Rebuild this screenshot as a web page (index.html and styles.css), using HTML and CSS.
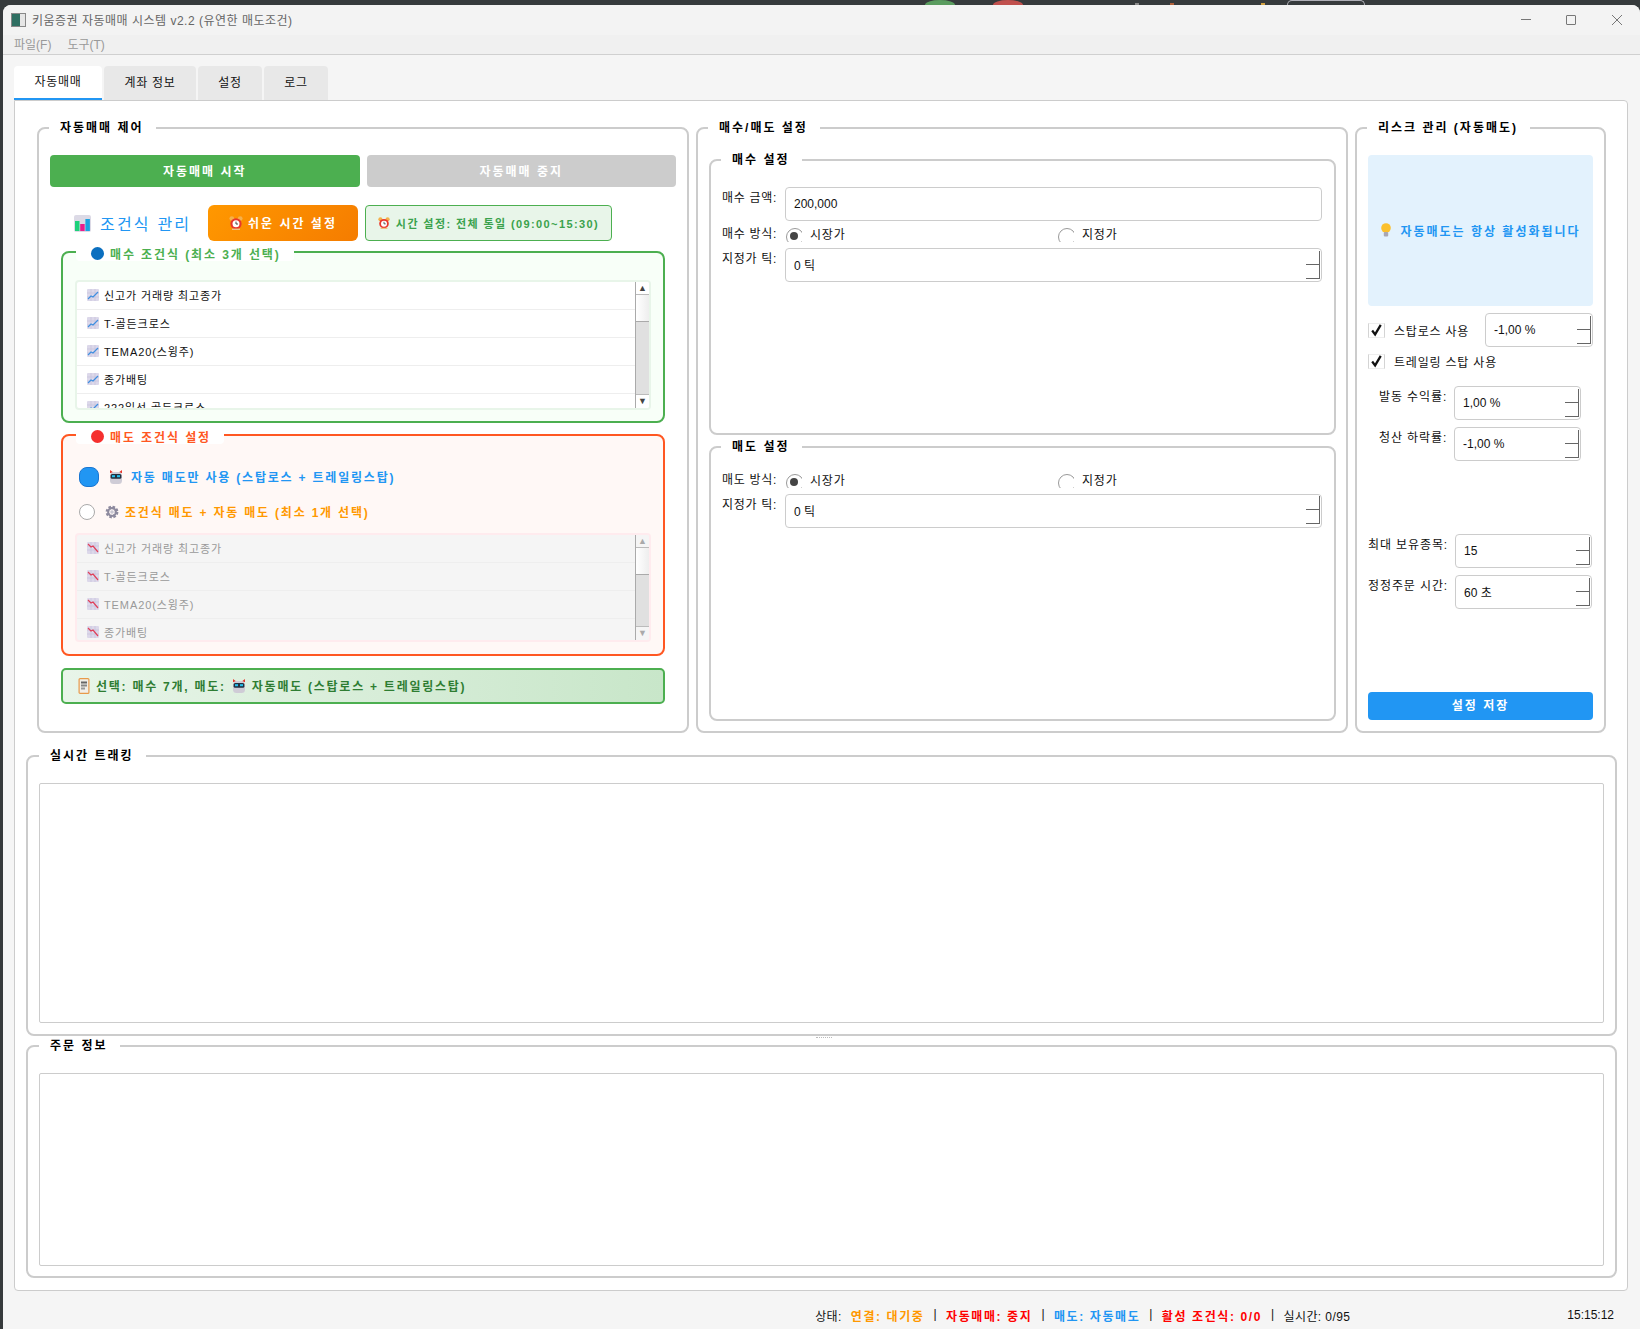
FILE: index.html
```html
<!DOCTYPE html>
<html lang="ko">
<head>
  <meta charset="UTF-8" />
  <title>키움증권 자동매매 시스템 v2.2 (유연한 매도조건)</title>
  <link rel="stylesheet" href="styles.css">
</head>
<body>
  <svg class="sprite" xmlns="http://www.w3.org/2000/svg">
    <symbol id="ic-bars" viewBox="0 0 17 17">
      <rect width="17" height="17" rx="2" fill="#dcdae6"/>
      <rect x="1" y="6" width="4.5" height="10" fill="#1dd17a"/>
      <rect x="6.2" y="9" width="4.5" height="7" fill="#e91e8c"/>
      <rect x="11.4" y="4" width="4.5" height="12" fill="#1aa3e0"/>
    </symbol>
    <symbol id="ic-alarm" viewBox="0 0 14 14">
      <circle cx="2.8" cy="2.6" r="2.4" fill="#f5b04a"/>
      <circle cx="11.2" cy="2.6" r="2.4" fill="#f5b04a"/>
      <circle cx="7" cy="7.8" r="5.6" fill="#e8372c"/>
      <circle cx="7" cy="7.8" r="3.5" fill="#fff"/>
      <path d="M7 5.6v2.4h2" stroke="#444" stroke-width="1" fill="none"/>
      <rect x="3" y="12.6" width="8" height="1.4" fill="#f0c080"/>
    </symbol>
    <symbol id="ic-up" viewBox="0 0 12 12">
      <rect width="12" height="12" rx="1" fill="#dcd8ea"/>
      <path d="M0 4h12M0 8h12M4 0v12M8 0v12" stroke="#c5c0d8" stroke-width=".6"/>
      <path d="M1 10l3-3 2 1 5-5" stroke="#3f8fe0" stroke-width="1.2" fill="none"/>
    </symbol>
    <symbol id="ic-down" viewBox="0 0 12 12">
      <rect width="12" height="12" rx="1" fill="#dcd8ea"/>
      <path d="M0 4h12M0 8h12M4 0v12M8 0v12" stroke="#c5c0d8" stroke-width=".6"/>
      <path d="M1 2l3 3 2-1 5 6" stroke="#e0405a" stroke-width="1.2" fill="none"/>
    </symbol>
    <symbol id="ic-robot" viewBox="0 0 14 14">
      <path d="M1 0l4 3H1zM13 0l-4 3h4z" fill="#e8372c"/>
      <rect x="1" y="2" width="12" height="12" rx="3.5" fill="#cfccd6"/>
      <rect x="1.6" y="4" width="10.8" height="4.8" rx="1.5" fill="#23303f"/>
      <rect x="3" y="5.2" width="3" height="2" fill="#27c3f0"/>
      <rect x="8" y="5.2" width="3" height="2" fill="#27c3f0"/>
    </symbol>
    <symbol id="ic-gear" viewBox="0 0 14 14">
      <circle cx="7" cy="7" r="4.6" fill="none" stroke="#8d8a9e" stroke-width="3.6" stroke-dasharray="2.2 1.4"/>
      <circle cx="7" cy="7" r="3.9" fill="none" stroke="#8d8a9e" stroke-width="2"/>
      <circle cx="7" cy="7" r="1.8" fill="#c9c7d2"/>
    </symbol>
    <symbol id="ic-clip" viewBox="0 0 11 16">
      <rect x=".6" y=".6" width="9.8" height="14.8" rx="1" fill="#f1efe9" stroke="#e89a4a" stroke-width="1.2"/>
      <rect x="2.5" y="3.5" width="6" height="2" fill="#666"/>
      <rect x="2.5" y="6.5" width="6" height="2" fill="#888"/>
      <rect x="2.5" y="9.5" width="4" height="2" fill="#999"/>
    </symbol>
    <symbol id="ic-bulb" viewBox="0 0 12 14">
      <circle cx="6" cy="5" r="4.8" fill="#fbc02d"/>
      <rect x="3.8" y="9" width="4.4" height="4.4" rx="1" fill="#a9a7b2"/>
    </symbol>
    <symbol id="ic-check" viewBox="0 0 17 15">
      <path d="M3.5 7.5l3.4 4.5 6.5-11" stroke="#111" stroke-width="2.6" fill="none"/>
    </symbol>
  </svg>

  <div class="desktop-strip">
    <span class="blip blip-green"></span>
    <span class="blip blip-red"></span>
    <span class="speck speck-grey"></span>
    <span class="speck speck-orange"></span>
    <span class="speck speck-yellow"></span>
    <span class="blip blip-outline"></span>
  </div>

  <div class="window">
    <header class="titlebar">
      <span class="app-icon"><i></i></span>
      <span class="app-title">키움증권 자동매매 시스템 v2.2 (유연한 매도조건)</span>
      <div class="win-controls">
        <span class="win-min"></span>
        <span class="win-max"></span>
        <span class="win-close">
          <svg width="12" height="12" viewBox="0 0 12 12"><path d="M1 1l10 10M11 1L1 11" stroke="#777" stroke-width="1"/></svg>
        </span>
      </div>
    </header>

    <nav class="menubar">
      <span>파일(F)</span>
      <span>도구(T)</span>
    </nav>

    <div class="tabs">
      <span class="tab tab-active tab-first">자동매매</span>
      <span class="tab tab-account">계좌 정보</span>
      <span class="tab tab-small">설정</span>
      <span class="tab tab-small">로그</span>
    </div>

    <main class="pane">
      <div class="top-row">

        <section class="group">
          <h3 class="group-title">자동매매 제어</h3>
          <div class="btn-row">
            <button class="btn btn-start">자동매매 시작</button>
            <button class="btn btn-stop">자동매매 중지</button>
          </div>

          <div class="cond-head">
            <svg class="icon-bars"><use href="#ic-bars"/></svg>
            <span class="cond-title">조건식 관리</span>
            <button class="btn-time"><svg class="icon-14"><use href="#ic-alarm"/></svg>쉬운 시간 설정</button>
            <div class="time-note"><svg class="icon-note"><use href="#ic-alarm"/></svg>시간 설정: 전체 통일 (09:00~15:30)</div>
          </div>

          <div class="cond-box cond-buy">
            <h4 class="cond-legend"><span class="dot dot-blue"></span>매수 조건식 (최소 3개 선택)</h4>
            <div class="cond-list list-buy">
              <ul class="cond-rows">
                <li><svg class="icon-12"><use href="#ic-up"/></svg>신고가 거래량 최고종가</li>
                <li><svg class="icon-12"><use href="#ic-up"/></svg>T-골든크로스</li>
                <li><svg class="icon-12"><use href="#ic-up"/></svg>TEMA20(스윙주)</li>
                <li><svg class="icon-12"><use href="#ic-up"/></svg>종가배팅</li>
                <li><svg class="icon-12"><use href="#ic-up"/></svg>222일선 골든크로스</li>
              </ul>
              <div class="scrollbar">
                <span class="sb-arrow">▲</span>
                <span class="sb-handle"></span>
                <span class="sb-track"></span>
                <span class="sb-arrow sb-arrow-down">▼</span>
              </div>
            </div>
          </div>

          <div class="cond-box cond-sell">
            <h4 class="cond-legend"><span class="dot dot-red"></span>매도 조건식 설정</h4>
            <div class="sell-opt sell-opt-auto">
              <span class="radio-big"></span>
              <svg class="icon-14"><use href="#ic-robot"/></svg>
              자동 매도만 사용 (스탑로스 + 트레일링스탑)
            </div>
            <div class="sell-opt sell-opt-cond">
              <span class="radio-small"></span>
              <svg class="icon-14"><use href="#ic-gear"/></svg>
              조건식 매도 + 자동 매도 (최소 1개 선택)
            </div>
            <div class="cond-list list-sell">
              <ul class="cond-rows">
                <li><svg class="icon-12"><use href="#ic-down"/></svg>신고가 거래량 최고종가</li>
                <li><svg class="icon-12"><use href="#ic-down"/></svg>T-골든크로스</li>
                <li><svg class="icon-12"><use href="#ic-down"/></svg>TEMA20(스윙주)</li>
                <li><svg class="icon-12"><use href="#ic-down"/></svg>종가배팅</li>
              </ul>
              <div class="scrollbar">
                <span class="sb-arrow">▲</span>
                <span class="sb-handle"></span>
                <span class="sb-track"></span>
                <span class="sb-arrow sb-arrow-down">▼</span>
              </div>
            </div>
          </div>

          <div class="summary">
            <svg class="icon-clip"><use href="#ic-clip"/></svg>
            선택: 매수 7개, 매도:
            <svg class="icon-14"><use href="#ic-robot"/></svg>
            자동매도 (스탑로스 + 트레일링스탑)
          </div>
        </section>

        <section class="group group-orders">
          <h3 class="group-title">매수/매도 설정</h3>

          <div class="group sub-group">
            <h3 class="group-title">매수 설정</h3>
            <div class="form-grid">
              <label>매수 금액:</label>
              <div class="field">200,000</div>
              <label class="label-radio">매수 방식:</label>
              <div class="radio-row">
                <span class="radio-item"><span class="radio radio-on"></span>시장가</span>
                <span class="radio-item"><span class="radio"></span>지정가</span>
              </div>
              <label>지정가 틱:</label>
              <div class="field">0 틱<span class="spin-btn"><i></i><i></i></span></div>
            </div>
          </div>

          <div class="group sub-group">
            <h3 class="group-title">매도 설정</h3>
            <div class="form-grid">
              <label class="label-radio">매도 방식:</label>
              <div class="radio-row">
                <span class="radio-item"><span class="radio radio-on"></span>시장가</span>
                <span class="radio-item"><span class="radio"></span>지정가</span>
              </div>
              <label>지정가 틱:</label>
              <div class="field">0 틱<span class="spin-btn"><i></i><i></i></span></div>
            </div>
          </div>
        </section>

        <section class="group group-risk">
          <h3 class="group-title">리스크 관리 (자동매도)</h3>
          <div class="risk-info"><svg class="icon-bulb"><use href="#ic-bulb"/></svg>자동매도는 항상 활성화됩니다</div>

          <div class="check-row">
            <span class="check"><svg><use href="#ic-check"/></svg></span>
            <span class="check-text">스탑로스 사용</span>
            <div class="field field-stop">-1,00 %<span class="spin-btn"><i></i><i></i></span></div>
          </div>
          <div class="check-row check-row-trail">
            <span class="check"><svg><use href="#ic-check"/></svg></span>
            <span class="check-text">트레일링 스탑 사용</span>
          </div>

          <div class="risk-grid risk-grid-trail">
            <label>발동 수익률:</label>
            <div class="field">1,00 %<span class="spin-btn"><i></i><i></i></span></div>
            <label>청산 하락률:</label>
            <div class="field">-1,00 %<span class="spin-btn"><i></i><i></i></span></div>
          </div>

          <div class="risk-grid risk-grid-etc">
            <label>최대 보유종목:</label>
            <div class="field">15<span class="spin-btn"><i></i><i></i></span></div>
            <label>정정주문 시간:</label>
            <div class="field">60 초<span class="spin-btn"><i></i><i></i></span></div>
          </div>

          <button class="btn btn-save">설정 저장</button>
        </section>
      </div>

      <section class="group group-wide group-track">
        <h3 class="group-title">실시간 트래킹</h3>
        <div class="table-box"></div>
      </section>
      <div class="splitter"><span></span></div>
      <section class="group group-wide group-order">
        <h3 class="group-title">주문 정보</h3>
        <div class="table-box"></div>
      </section>
    </main>

    <footer class="statusbar">
      <div class="status-fields">
        <span>상태:</span>
        <b class="st-orange">연결: 대기중</b>
        <span>|</span>
        <b class="st-red">자동매매: 중지</b>
        <span>|</span>
        <b class="st-blue">매도: 자동매도</b>
        <span>|</span>
        <b class="st-red">활성 조건식: 0/0</b>
        <span>|</span>
        <span>실시간: 0/95</span>
      </div>
      <span class="status-time">15:15:12</span>
    </footer>
  </div>
</body>
</html>
```

FILE: styles.css
```css
* {
  box-sizing: border-box;
}
html, body {
  margin: 0;
  padding: 0;
  height: 100%;
}
body {
  display: flex;
  flex-direction: column;
  padding-left: 3px;
  background-color: #363a3c;
  font-family: "Liberation Sans", "Noto Sans CJK KR", sans-serif;
  font-size: 11px;
  color: #111;
  overflow: hidden;
}
h3, h4, ul {
  margin: 0;
  padding: 0;
  list-style: none;
}
button {
  font-family: inherit;
  border: none;
  padding: 0;
}
.sprite {
  display: none;
}

/* strip of the desktop above the window */
.desktop-strip {
  display: flex;
  align-items: flex-end;
  height: 5px;
  padding-left: 922px;
  flex-shrink: 0;
}
.blip {
  height: 5px;
  border-radius: 15px 15px 0 0 / 5px 5px 0 0;
}
.blip-green {
  width: 30px;
  background-color: #5a9c5f;
}
.blip-red {
  width: 30px;
  margin-left: 38px;
  background-color: #c0504d;
}
.speck {
  width: 4px;
  height: 2px;
}
.speck-grey {
  margin-left: 112px;
  background-color: #8a8a8a;
}
.speck-orange {
  margin-left: 31px;
  background-color: #b0603a;
}
.speck-yellow {
  margin-left: 87px;
  background-color: #d0a040;
}
.blip-outline {
  width: 78px;
  margin-left: 22px;
  height: 5px;
  border: 1px solid #b0b0b8;
  border-bottom: none;
  border-radius: 8px 8px 0 0;
}

.window {
  flex: 1;
  display: flex;
  flex-direction: column;
  background-color: #f5f5f5;
  border-radius: 8px 8px 0 0;
  overflow: hidden;
}

/* title bar */
.titlebar {
  display: flex;
  align-items: center;
  height: 30px;
  padding: 0 0 1px 8px;
  background-color: #f3f3f3;
}
.app-icon {
  display: flex;
  width: 15px;
  height: 14px;
  border: 1px solid #888;
  background-color: #e6e6e6;
}
.app-icon i {
  width: 8px;
  background-color: #2f6f62;
}
.app-title {
  margin-left: 6px;
  font-size: 12px;
  letter-spacing: .5px;
  color: #666;
}
.win-controls {
  display: flex;
  align-items: center;
  margin-left: auto;
  padding-right: 17px;
}
.win-min {
  width: 10px;
  height: 1px;
  background-color: #777;
}
.win-max {
  width: 10px;
  height: 10px;
  margin-left: 35px;
  border: 1px solid #777;
  border-radius: 1px;
}
.win-close {
  display: flex;
  margin-left: 35px;
}

.menubar {
  display: flex;
  gap: 16px;
  align-items: center;
  height: 20px;
  padding: 0 0 2px 11px;
  background-color: #f0f0f0;
  border-bottom: 1px solid #d0d0d0;
  color: #999;
  font-size: 12px;
}

/* tabs */
.tabs {
  display: flex;
  gap: 2px;
  height: 45px;
  padding: 11px 0 0 11px;
  flex-shrink: 0;
}
.tab {
  display: flex;
  align-items: center;
  justify-content: center;
  height: 34px;
  padding-bottom: 3px;
  background-color: #e8e8e8;
  border-radius: 4px 4px 0 0;
  font-size: 12px;
  letter-spacing: .7px;
}
.tab-active {
  background-color: #fff;
  border-bottom: 2px solid #2196f3;
}
.tab-first {
  width: 88px;
}
.tab-account {
  width: 92px;
}
.tab-small {
  width: 64px;
}

.pane {
  display: flex;
  flex-direction: column;
  height: 1191px;
  margin: 0 12px 0 11px;
  padding: 26px 10px 0 11px;
  background-color: #fff;
  border: 1px solid #ccc;
  border-radius: 0 4px 4px 4px;
  flex-shrink: 0;
}
.top-row {
  display: grid;
  grid-template-columns: 652px 652px 251px;
  gap: 7px;
  height: 606px;
  margin: 0 0 22px 11px;
}

/* group boxes */
.group {
  position: relative;
  display: flex;
  flex-direction: column;
  padding: 26px 11px 0;
  border: 2px solid #ccc;
  border-radius: 8px;
  background-color: #fff;
}
.group-title {
  position: absolute;
  top: -9px;
  left: 10px;
  padding: 0 12px 0 11px;
  background-color: #fff;
  font-size: 12px;
  font-weight: 700;
  line-height: 16px;
  letter-spacing: 2px;
  color: #000;
}
.group-wide .group-title {
  left: 11px;
}

.btn-row {
  display: flex;
  gap: 7px;
}
.btn {
  height: 32px;
  padding-bottom: 2px;
  border-radius: 4px;
  font-size: 12px;
  font-weight: 700;
  letter-spacing: 2px;
  color: #fff;
}
.btn-start {
  flex: 1;
  background-color: #4caf50;
}
.btn-stop {
  flex: 1;
  background-color: #ccc;
}

.cond-head {
  display: flex;
  align-items: center;
  height: 36px;
  margin-top: 18px;
  padding-left: 24px;
}
.icon-bars {
  width: 17px;
  height: 17px;
}
.cond-title {
  width: 108px;
  margin-left: 9px;
  font-size: 16px;
  letter-spacing: 2.2px;
  white-space: nowrap;
  color: #2196f3;
}
.btn-time {
  display: flex;
  align-items: center;
  justify-content: center;
  gap: 5px;
  width: 150px;
  height: 36px;
  padding-bottom: 1px;
  border-radius: 6px;
  background: linear-gradient(135deg, #ff9800, #f57c00);
  color: #fff;
  font-size: 12px;
  font-weight: 700;
  letter-spacing: 2px;
}
.time-note {
  display: flex;
  align-items: center;
  justify-content: center;
  gap: 6px;
  width: 247px;
  height: 36px;
  margin-left: 7px;
  border: 1px solid #4caf50;
  border-radius: 4px;
  background-color: #e8f5e9;
  color: #3aa24c;
  font-size: 11px;
  font-weight: 700;
  letter-spacing: 1.4px;
  white-space: nowrap;
}
.icon-note {
  width: 12px;
  height: 12px;
  flex-shrink: 0;
}
.icon-14 {
  width: 14px;
  height: 14px;
  flex-shrink: 0;
}
.icon-12 {
  width: 12px;
  height: 12px;
  margin-right: 5px;
  flex-shrink: 0;
}

/* condition boxes */
.cond-box {
  position: relative;
  padding: 27px 12px 0;
  border-radius: 8px;
  border: 2px solid;
}
.cond-buy {
  height: 172px;
  margin: 10px 11px 0;
  border-color: #4caf50;
  background-color: #f8fff8;
}
.cond-sell {
  display: flex;
  flex-direction: column;
  height: 222px;
  margin: 11px 11px 0;
  padding-top: 30px;
  border-color: #ff5722;
  background-color: #fff8f6;
}
.cond-legend {
  position: absolute;
  top: -8px;
  left: 13px;
  display: flex;
  align-items: center;
  gap: 6px;
  height: 16px;
  padding: 0 13px 0 15px;
  background-color: #fff;
  border-radius: 4px;
  font-size: 12px;
  font-weight: 700;
  letter-spacing: 1.9px;
}
.cond-buy .cond-legend {
  color: #4caf50;
}
.cond-sell .cond-legend {
  color: #ff5722;
}
.dot {
  width: 13px;
  height: 13px;
  border-radius: 50%;
}
.dot-blue {
  background-color: #0b6fbf;
}
.dot-red {
  background-color: #f5302e;
}

.cond-list {
  display: flex;
  border: 2px solid;
  border-radius: 4px;
  overflow: hidden;
}
.list-buy {
  height: 130px;
  border-color: #e8f5e9;
  background-color: #fff;
}
.list-sell {
  height: 109px;
  margin-top: 11px;
  border-color: #ffebee;
  background-color: #f5f5f5;
  color: #999;
}
.cond-rows {
  flex: 1;
  overflow: hidden;
}
.cond-rows li {
  display: flex;
  align-items: center;
  height: 28px;
  padding: 0 0 2px 10px;
  border-bottom: 1px solid #eee;
  letter-spacing: .9px;
}
.scrollbar {
  display: flex;
  flex-direction: column;
  width: 14px;
  border-left: 1px solid #aaa;
  background-color: #fff;
}
.list-sell .scrollbar {
  background-color: #f5f5f5;
}
.list-sell .sb-arrow {
  color: #aaa;
}
.sb-arrow {
  height: 13px;
  border-bottom: 1px solid #bbb;
  font-size: 9px;
  line-height: 12px;
  text-align: center;
  color: #444;
}
.sb-arrow-down {
  height: 14px;
  border-bottom: none;
  border-top: 1px solid #bbb;
}
.sb-handle {
  height: 27px;
  border-bottom: 1px solid #aaa;
  background: linear-gradient(90deg, #fff, #eee);
}
.sb-track {
  flex: 1;
  background-color: #e0e0e0;
}

.sell-opt {
  display: flex;
  align-items: center;
  padding: 0 0 1px 4px;
  font-size: 12px;
  font-weight: 700;
  letter-spacing: 1.8px;
}
.sell-opt-auto {
  gap: 10px;
  height: 22px;
  color: #2196f3;
}
.sell-opt-auto .icon-14 {
  margin-right: -2px;
}
.sell-opt-cond {
  gap: 10px;
  height: 20px;
  margin-top: 14px;
  color: #ff9800;
}
.sell-opt-cond .icon-14 {
  margin-right: -4px;
}
.radio-big {
  width: 20px;
  height: 20px;
  border: 1px solid #1976d2;
  border-radius: 8px;
  background-color: #2196f3;
}
.radio-small {
  width: 16px;
  height: 16px;
  border: 1px solid #aaa;
  border-radius: 50%;
  background-color: #fff;
}

.summary {
  display: flex;
  align-items: center;
  gap: 6px;
  height: 36px;
  margin: 12px 11px 0;
  padding: 0 0 1px 15px;
  border: 2px solid #4caf50;
  border-radius: 5px;
  background: linear-gradient(90deg, #e8f5e9, #c8e6c9);
  color: #2e7d32;
  font-size: 12px;
  font-weight: 700;
  letter-spacing: 1.75px;
}
.icon-clip {
  width: 12px;
  height: 16px;
}

/* order settings */
.group-orders {
  gap: 11px;
  padding: 30px 10px 10px 11px;
}
.sub-group {
  flex: 1;
  padding: 26px 12px 0 11px;
}
.form-grid {
  display: grid;
  grid-template-columns: 56px 1fr;
  column-gap: 7px;
  row-gap: 7px;
  align-items: start;
}
.form-grid label {
  line-height: 23px;
  font-size: 12px;
  letter-spacing: .7px;
  white-space: nowrap;
}
.form-grid .label-radio {
  line-height: 13px;
}
.field {
  position: relative;
  display: flex;
  align-items: center;
  justify-content: space-between;
  height: 34px;
  padding: 0 1px 1px 8px;
  border: 1px solid #ccc;
  border-radius: 4px;
  background-color: #fff;
  font-size: 12px;
}
.spin-btn {
  display: flex;
  flex-direction: column;
  width: 14px;
  height: 28px;
}
.spin-btn i {
  flex: 1;
  border-right: 1px solid #666;
  border-bottom: 1px solid #666;
}
.radio-row {
  display: grid;
  grid-template-columns: 272px 1fr;
  height: 13px;
  padding-left: 1px;
}
.radio-item {
  display: flex;
  align-items: flex-start;
  gap: 8px;
  font-size: 12px;
  line-height: 14px;
  letter-spacing: .8px;
}
.radio {
  position: relative;
  width: 16px;
  height: 14px;
  overflow: hidden;
}
.radio::before {
  content: "";
  position: absolute;
  top: 0;
  left: 0;
  width: 16px;
  height: 16px;
  border: 1px solid #999;
  border-radius: 50%;
}
.radio-on::after {
  content: "";
  position: absolute;
  top: 4px;
  left: 4px;
  width: 8px;
  height: 8px;
  border-radius: 50%;
  background-color: #444;
}

/* risk panel */
.risk-info {
  display: flex;
  align-items: center;
  justify-content: center;
  gap: 8px;
  height: 151px;
  padding-bottom: 1px;
  border-radius: 4px;
  background-color: #e3f2fd;
  color: #2196f3;
  font-size: 12px;
  font-weight: 700;
  letter-spacing: 2px;
  white-space: nowrap;
}
.icon-bulb {
  width: 12px;
  height: 14px;
}
.check-row {
  display: flex;
  align-items: center;
  height: 34px;
  margin-top: 7px;
  font-size: 12px;
  letter-spacing: .8px;
}
.check-row-trail {
  height: 16px;
  margin-top: 6px;
}
.check {
  width: 17px;
  height: 15px;
  margin-right: 9px;
  border: 1px solid #d4d4d4;
  border-top-color: #eee;
  border-bottom-color: #eee;
}
.check svg {
  display: block;
  width: 15px;
  height: 13px;
}
.field-stop {
  width: 108px;
  margin-left: auto;
  letter-spacing: 0;
}
.risk-grid {
  display: grid;
  row-gap: 7px;
  column-gap: 7px;
  align-items: start;
}
.risk-grid label {
  font-size: 12px;
  line-height: 23px;
  letter-spacing: .9px;
  text-align: right;
  white-space: nowrap;
}
.risk-grid-trail {
  grid-template-columns: 68px 127px;
  margin: 17px 0 0 11px;
}
.risk-grid-etc {
  grid-template-columns: 80px 137px;
  margin-top: 73px;
}
.btn-save {
  height: 28px;
  margin: auto 0 11px;
  padding-bottom: 3px;
  background-color: #2196f3;
}

/* tracking and order boxes */
.group-wide {
  padding: 26px 11px 11px;
}
.group-track {
  height: 281px;
}
.group-order {
  height: 233px;
  padding: 26px 11px 10px;
}
.table-box {
  flex: 1;
  border: 1px solid #ccc;
  border-radius: 2px;
}
.splitter {
  display: flex;
  justify-content: center;
  align-items: center;
  height: 9px;
}
.splitter span {
  width: 16px;
  border-top: 1px dotted #bbb;
  margin: 0 0 6px 4px;
}

/* status bar */
.statusbar {
  flex: 1;
  display: flex;
  align-items: center;
  padding: 10px 26px 0 0;
  font-size: 12px;
}
.status-fields {
  display: flex;
  gap: 9px;
  margin-left: auto;
  letter-spacing: .4px;
}
.status-fields b {
  letter-spacing: 1.6px;
}
.status-time {
  margin-left: 217px;
}
.st-orange {
  color: #ff9800;
}
.st-red {
  color: #f00;
}
.st-blue {
  color: #2196f3;
}
```
